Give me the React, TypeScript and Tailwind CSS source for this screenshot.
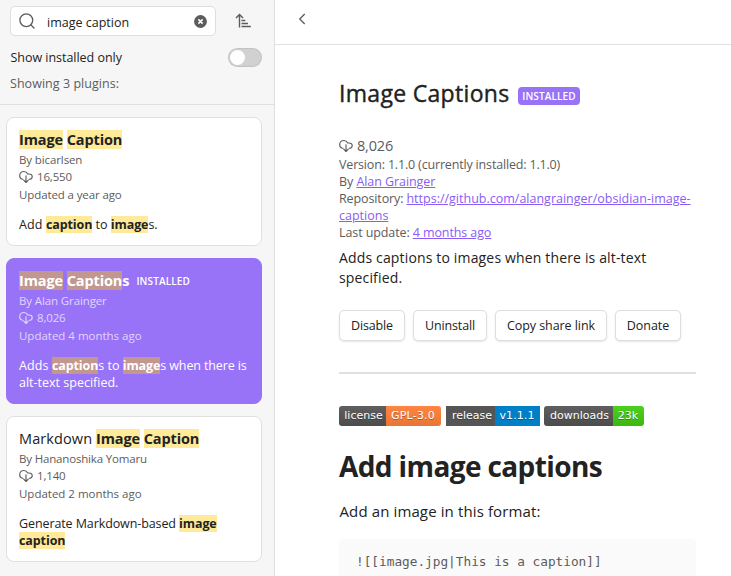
import type { ReactNode } from 'react';

function CloudDownload({ className }: { className: string }) {
  return (
    <svg className={className} viewBox="0 0 14 14" fill="none" stroke="currentColor" strokeWidth="1.15" strokeLinecap="round" strokeLinejoin="round">
      <path d="M3.9 9.2H3.4C1.8 8.9 .7 7.6 .7 5.8C.7 3.4 2.5 1.5 4.8 1.5C6.6 1.5 8 2.5 8.7 4H9.9C11.8 4 13.2 5.2 13.2 6.7C13.2 8.2 12 9.2 10.3 9.2" />
      <path d="M7 5.8V12.2M4.7 10.2L7 12.5L9.3 10.2" />
    </svg>
  );
}

function Mark({ children, active, title }: { children: ReactNode; active?: boolean; title?: boolean }) {
  return (
    <span
      className={`font-bold ${active ? 'bg-[#c2978f]' : 'bg-[#ffea99]'} ${title ? 'tracking-[-0.13px]' : 'tracking-[-0.1px]'}`}
    >
      {children}
    </span>
  );
}

interface CardProps {
  title: ReactNode;
  author: ReactNode;
  downloads: string;
  updated: ReactNode;
  description: ReactNode;
  active?: boolean;
  tall?: boolean;
}

function PluginCard({ title, author, downloads, updated, description, active, tall }: CardProps) {
  return (
    <article
      className={`shrink-0 rounded-[8px] border px-3 pt-3 ${tall ? 'h-[146px]' : 'h-[129px]'} ${
        active ? 'border-[#9873f7] bg-[#9873f7] text-white' : 'border-[#e0e0e0] bg-white text-[#222222]'
      }`}
    >
      <h3 className="flex h-[20px] items-center whitespace-pre text-[14.5px] leading-[20px]">{title}</h3>
      <div className={`mt-[1px] text-[11.5px] leading-[17px] tracking-[-0.11px] ${active ? 'text-[#e0d5fd]' : 'text-[#5c5c5c]'}`}>
        <div>{author}</div>
        <div className="flex items-center">
          <CloudDownload className="mt-[1px] mr-[4px] h-[14px] w-[14px]" />
          <span className="tracking-[-0.15px]">{downloads}</span>
        </div>
        <div className="mt-[1px]">{updated}</div>
      </div>
      <p className="mt-[14px] whitespace-pre text-[12.5px] leading-[16.5px]">{description}</p>
    </article>
  );
}

function ActionButton({ className, children }: { className: string; children: ReactNode }) {
  return (
    <button
      className={`h-[31px] rounded-[5px] border border-[#dedede] bg-white pb-[1px] text-[12.5px] leading-[17px] shadow-[0_1px_2px_rgba(0,0,0,0.10)] ${className}`}
    >
      {children}
    </button>
  );
}

function Shield({ label, value, box, labelBox, valueBox }: { label: string; value: string; box: string; labelBox: string; valueBox: string }) {
  return (
    <div className={`flex h-[20px] overflow-hidden text-center font-['DejaVu_Sans'] text-[11px] leading-[20px] text-white [text-shadow:0_1px_0_rgba(1,1,1,0.3)] ${box}`}>
      <span className={labelBox}>{label}</span>
      <span className={valueBox}>{value}</span>
    </div>
  );
}

export default function App() {
  return (
    <div className="flex h-[576px] w-[731px] overflow-hidden bg-white font-['Open_Sans','Noto_Sans',sans-serif] text-[#222222]">
      <aside className="flex w-[275px] shrink-0 flex-col border-r border-[#e0e0e0] bg-[#f6f6f6]">
        <header className="h-[105px] shrink-0 border-b border-[#e0e0e0] pt-[6px] pl-[10px]">
          <div className="flex h-[30px] items-center">
            <div className="flex h-[30px] w-[206px] items-center rounded-[5px] border border-[#dedede] bg-white pr-[8px] pl-[8px]">
              <svg className="h-[16px] w-[16px] text-[#5c5c5c]" viewBox="0 0 16 16" fill="none" stroke="currentColor" strokeWidth="1.3" strokeLinecap="round">
                <circle cx="7.3" cy="7.3" r="6.4" />
                <path d="M12 12L15 15" />
              </svg>
              <span className="ml-[12px] flex-1 pt-[3px] text-[12.5px] leading-[18px]">image caption</span>
              <svg className="h-[13px] w-[13px]" viewBox="0 0 13 13">
                <circle cx="6.5" cy="6.5" r="6.4" fill="#5c5c5c" />
                <path d="M4.4 4.4L8.6 8.6M8.6 4.4L4.4 8.6" stroke="#fff" strokeWidth="1.5" />
              </svg>
            </div>
            <svg className="ml-[19px] h-[16px] w-[17px] text-[#5c5c5c]" viewBox="0 0 17 16" fill="none" stroke="currentColor" strokeWidth="1.4">
              <path d="M4.5 14.4V1.5M1 5L4.5 1.4L8 5" />
              <path d="M6.5 7.5H10.3M6.5 10.5H13M6.5 13.5H15.8" strokeWidth="1.3" />
            </svg>
          </div>
          <div className="mt-[11px] flex h-[21px] items-center pr-[12px]">
            <span className="flex-1 pl-[0.5px] text-[12.5px] leading-[20px] tracking-[-0.03px]">Show installed only</span>
            <span className="flex h-[19px] w-[34px] items-center rounded-full bg-[#d1d1d1] pl-[2px] shadow-[inset_0_0_1px_1px_rgba(0,0,0,0.07)]">
              <span className="h-[15px] w-[15px] rounded-full bg-white" />
            </span>
          </div>
          <div className="mt-[6px] text-[12.5px] leading-[20px] tracking-[0.04px] text-[#5c5c5c]">Showing 3 plugins:</div>
        </header>
        <div className="flex flex-col gap-3 pt-3 pr-3 pl-[6px]">
          <PluginCard
            title={<span><Mark title>Image</Mark> <Mark title>Caption</Mark></span>}
            author="By bicarlsen"
            downloads="16,550"
            updated="Updated a year ago"
            description={<><span className="tracking-[0.12px]">Add </span><Mark>caption</Mark> to <Mark>image</Mark>s.</>}
          />
          <PluginCard
            active
            tall
            title={
              <>
                <span><Mark active title>Image</Mark> <Mark active title>Caption</Mark><b>s</b></span>
                <span className="ml-[7px] text-[10px] font-semibold tracking-[0.13px]">INSTALLED</span>
              </>
            }
            author={<span className="tracking-[-0.12px]">By Alan Grainger</span>}
            downloads="8,026"
            updated={<span className="tracking-[-0.01px]">Updated 4 months ago</span>}
            description={<><span className="tracking-[0.1px]">Adds </span><Mark active>caption</Mark>s to <Mark active>image</Mark><span className="tracking-[-0.12px]">s when there is</span>{'\n'}alt-text specified.</>}
          />
          <PluginCard
            tall
            title={<span><span className="tracking-[0.1px]">Markdown </span><Mark title>Image</Mark> <Mark title>Caption</Mark></span>}
            author={<span className="tracking-[-0.17px]">By Hananoshika Yomaru</span>}
            downloads="1,140"
            updated={<span className="tracking-[-0.01px]">Updated 2 months ago</span>}
            description={<><span className="tracking-[-0.1px]">Generate Markdown-based </span><Mark>image</Mark>{'\n'}<Mark>caption</Mark></>}
          />
        </div>
      </aside>

      <main className="flex min-w-0 flex-1 flex-col">
        <header className="h-[45px] shrink-0 border-b border-[#e0e0e0] pt-[13px] pl-[23px]">
          <svg className="h-[12px] w-[8px] text-[#5c5c5c]" viewBox="0 0 8 12" fill="none" stroke="currentColor" strokeWidth="1.3">
            <path d="M6.7 1L1.7 6L6.7 11" />
          </svg>
        </header>
        <div className="w-[421px] pt-[31px] pl-[64px]">
          <div className="flex h-[34px] items-center">
            <h1 className="w-[171px] whitespace-nowrap text-[23px] leading-[34px] font-medium tracking-[0.31px] [-webkit-text-stroke:0.4px_#222222]">Image Captions</h1>
            <span className="mt-[5px] ml-[8px] flex h-[18px] w-[62px] items-center justify-center rounded-[4px] bg-[#9873f7] pt-[1px] text-[10px] font-semibold tracking-[0.13px] text-white">INSTALLED</span>
          </div>
          <div className="mt-[26px] text-[12.5px] leading-[17px] text-[#5c5c5c]">
            <div className="flex h-[20px] items-center">
              <CloudDownload className="mr-[4px] h-[14px] w-[14px]" />
              <span className="text-[14.5px] leading-[20px] tracking-[-0.18px]">8,026</span>
            </div>
            <div className="tracking-[-0.17px]">Version: 1.1.0 (currently installed: 1.1.0)</div>
            <div className="tracking-[-0.07px]">By <a className="text-[#8a5cf5] underline">Alan Grainger</a></div>
            <div className="whitespace-nowrap">
              <span className="tracking-[-0.12px]">Repository: </span>
              <a className="text-[#8a5cf5] underline">https://github.com/alangrainger/obsidian-image-<br />captions</a>
            </div>
            <div className="tracking-[-0.1px]">Last update: <a className="text-[#8a5cf5] underline">4 months ago</a></div>
          </div>
          <p className="mt-[7px] text-[14px] leading-[20px] tracking-[0.155px]">Adds captions to images when there is alt-text<br />specified.</p>
          <div className="mt-[22px] flex gap-2">
            <ActionButton className="w-[66px] tracking-[-0.13px]">Disable</ActionButton>
            <ActionButton className="w-[74px] tracking-[-0.14px]">Uninstall</ActionButton>
            <ActionButton className="w-[112px] tracking-[-0.07px]">Copy share link</ActionButton>
            <ActionButton className="w-[66px]">Donate</ActionButton>
          </div>
          <hr className="mt-[31px] border-t-2 border-[#e0e0e0]" />
          <div className="mt-[32px] flex">
            <Shield label="license" value="GPL-3.0" box="w-[102px] rounded-[3px]" labelBox="w-[47px] pl-[2px] bg-linear-to-b from-[#5f5f5f] to-[#4c4c4c]" valueBox="flex-1 pr-[1px] tracking-[0.2px] bg-linear-to-b from-[#fe8543] to-[#e87535]" />
            <Shield label="release" value="v1.1.1" box="ml-[5px] w-[94px]" labelBox="w-[49px] pl-[3px] bg-[#555555]" valueBox="flex-1 pr-[1px] tracking-[0.1px] bg-[#007ec6]" />
            <Shield label="downloads" value="23k" box="ml-[4px] w-[100px] rounded-[3px]" labelBox="w-[69px] pl-[2px] bg-linear-to-b from-[#5f5f5f] to-[#4c4c4c]" valueBox="flex-1 pr-[1px] bg-linear-to-b from-[#4dd01e] to-[#3eb60e]" />
          </div>
          <h2 className="mt-[20px] whitespace-nowrap text-[28px] leading-[40px] font-bold tracking-[-0.61px]">Add image captions</h2>
          <p className="mt-[13px] pl-[0.5px] text-[15px] leading-[24px] tracking-[0.12px]">Add an image in this format:</p>
          <pre className="mt-[16px] h-[60px] rounded-[4px] bg-[#fafafa] pt-[13px] pl-[17px] font-['DejaVu_Sans_Mono',monospace] text-[12.75px] leading-[20px] text-[#5c5c5c]">![[image.jpg|This is a caption]]</pre>
        </div>
      </main>
    </div>
  );
}
